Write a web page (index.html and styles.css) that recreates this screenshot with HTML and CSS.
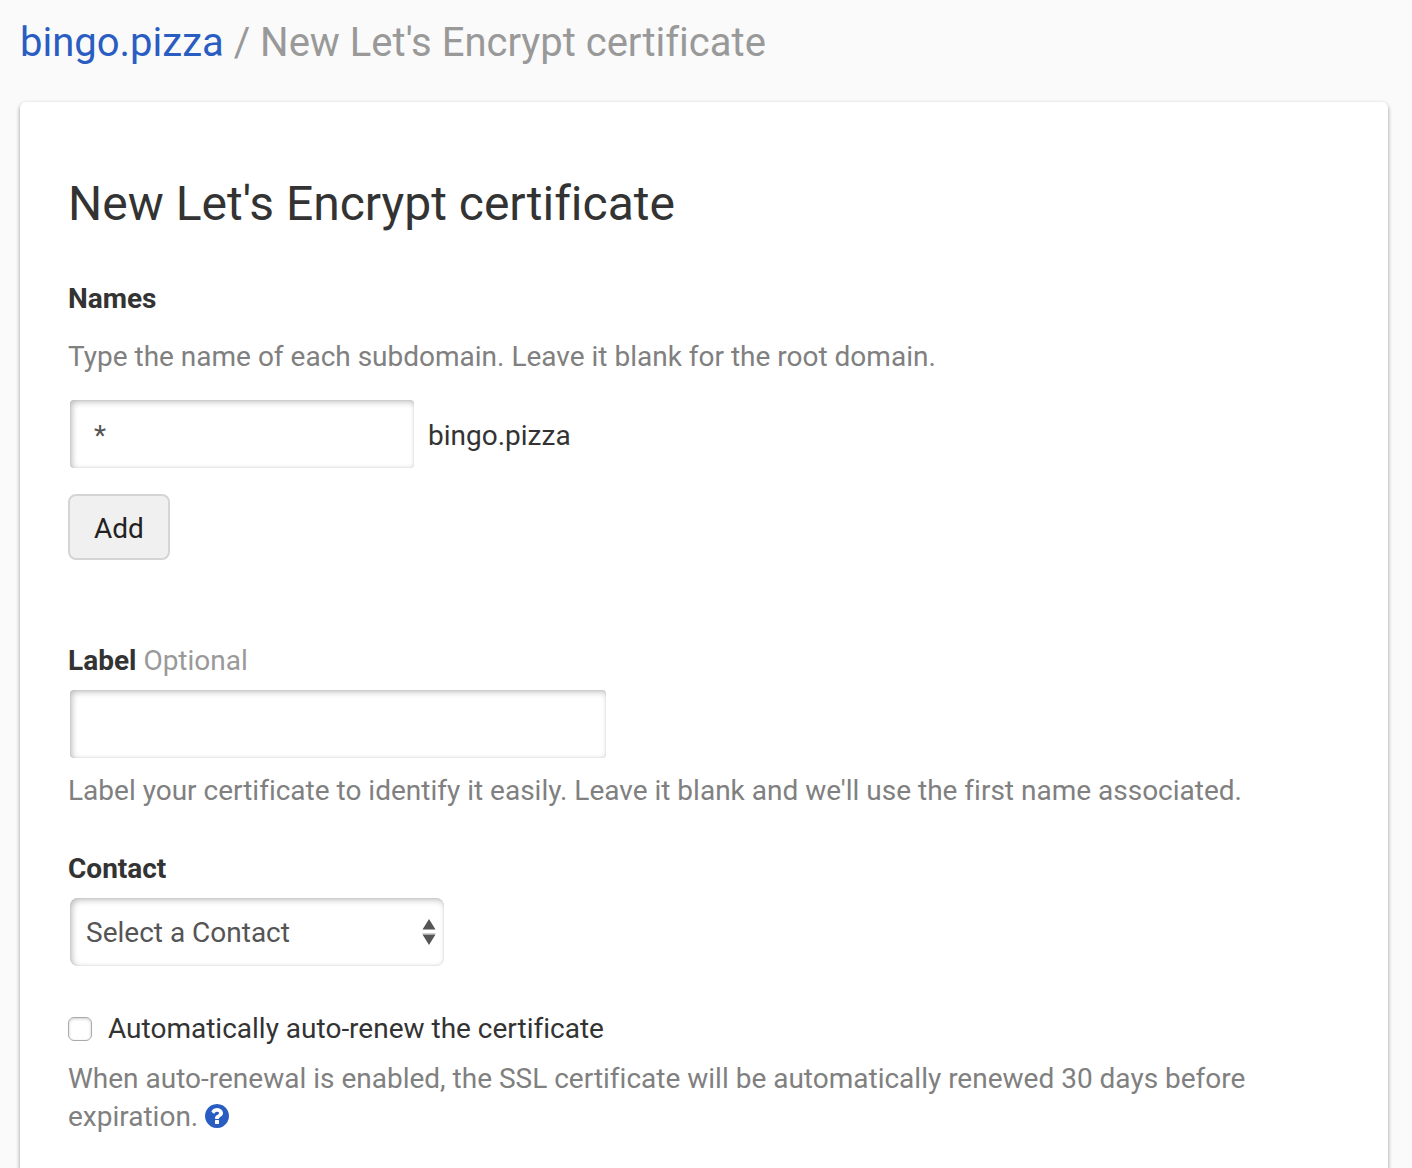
FILE: index.html
```html
<!DOCTYPE html>
<html lang="en">
<head>
<meta charset="utf-8">
<title>New Let's Encrypt certificate</title>
<link rel="stylesheet" href="styles.css">
</head>
<body>
<nav class="breadcrumb"><a href="#">bingo.pizza</a> <span>/</span> <span>New Let's Encrypt certificate</span></nav>
<main class="card">
  <h1>New Let's Encrypt certificate</h1>
  <form>
    <section class="names">
      <label class="title" for="name">Names</label>
      <p class="hint">Type the name of each subdomain. Leave it blank for the root domain.</p>
      <div class="name-row">
        <input class="field" id="name" type="text" value="*">
        <span class="suffix">bingo.pizza</span>
      </div>
      <button class="add" type="button">Add</button>
    </section>
    <section class="group">
      <label class="title" for="label">Label <span class="optional">Optional</span></label>
      <input class="field wide" id="label" type="text">
      <p class="hint">Label your certificate to identify it easily. Leave it blank and we'll use the first name associated.</p>
    </section>
    <section class="group">
      <label class="title" for="contact">Contact</label>
      <div class="select-wrap">
        <select class="field" id="contact"><option>Select a Contact</option></select>
        <svg class="arrows" viewBox="0 0 14 26" aria-hidden="true"><path d="M7 0l6.500 10.500H.5zM7 26l6.500-10.500H.5z"/><path class="rule" d="M.5 14h13v1H.5z"/></svg>
      </div>
    </section>
    <section class="group">
      <div class="check"><input type="checkbox" id="renew"><label for="renew">Automatically auto-renew the certificate</label></div>
      <p class="hint">When auto-renewal is enabled, the SSL certificate will be automatically renewed 30 days before expiration. <a class="help" href="#" aria-label="Help"><svg viewBox="0 0 1536 1536" aria-hidden="true"><path d="M896 1248v-192q0-14-9-23t-23-9H672q-14 0-23 9t-9 23v192q0 14 9 23t23 9h192q14 0 23-9t9-23zm256-672q0-88-55.500-163T958 297t-170-41q-243 0-371 213-15 24 8 42l132 100q7 6 19 6 16 0 25-12 53-68 86-92 34-24 86-24 48 0 85.500 26t37.500 59q0 38-20 61t-68 45q-63 28-115.500 86.500T640 892v36q0 14 9 23t23 9h192q14 0 23-9t9-23q0-19 21.500-49.500T972 829q32-18 49-28.500t46-35 44.500-48 28-60.500 12.500-81zm384 192q0 209-103 385.500T1153.500 1433 768 1536t-385.500-103T103 1153.500 0 768t103-385.500T382.500 103 768 0t385.500 103T1433 382.500 1536 768z"/></svg></a></p>
    </section>
  </form>
</main>
</body>
</html>
```

FILE: styles.css
```css
* { box-sizing: border-box; }
body {
  margin: 0;
  padding: 16px 24px 0 20px;
  background: #fafafa;
  color: #333;
  font: 28px/38px Roboto, sans-serif;
  font-variant-ligatures: none;
}
a { color: #2a5dc2; text-decoration: none; }
.breadcrumb {
  margin-bottom: 32px;
  color: #999;
  font-size: 40px;
  line-height: 54px;
}
.card {
  min-height: calc(100vh - 102px);
  padding: 68px 48px 34px;
  border-radius: 6px;
  background: #fff;
  box-shadow: 0 2px 4px rgba(0, 0, 0, .4);
}
h1 { margin: 0 0 42px; font-size: 48px; font-weight: 400; line-height: 68px; }
.title { display: block; font-weight: 700; }
.optional { color: #999; font-weight: 400; }
.hint { margin: 0; color: #808080; }
.names { margin-bottom: 82px; }
.names .hint { margin: 20px 0 24px; }
.name-row { display: flex; align-items: center; gap: 14px; margin: 0 0 26px 2px; }
.suffix { padding-top: 4px; }
.field {
  display: block;
  width: 344px;
  height: 68px;
  padding: 2px 24px 0;
  border: 0;
  border-radius: 4px;
  background: #fff;
  box-shadow: inset 2px 2px 6px rgba(0, 0, 0, .26), inset 0 0 2px rgba(0, 0, 0, .12);
  color: #555;
  font: inherit;
}
.add {
  display: block;
  height: 66px;
  padding: 4px 24px 0;
  border: 2px solid #d5d5d5;
  border-radius: 8px;
  background: #f0f0f0;
  color: #222;
  font: inherit;
}
.group { margin-bottom: 40px; }
.wide { width: 536px; margin: 10px 0 14px 2px; }
.select-wrap { position: relative; width: 374px; margin: 10px 0 0 2px; }
select.field { width: 100%; padding: 2px 16px 0; border-radius: 8px; appearance: none; }
.arrows { position: absolute; top: 21px; right: 8px; width: 14px; height: 26px; fill: #555; pointer-events: none; }
.rule { fill: #ccc; }
.check { display: flex; align-items: center; gap: 16px; margin: 44px 0 12px; }
.check input {
  width: 24px;
  height: 24px;
  margin: 0;
  border: 1px solid #aaa;
  border-radius: 6px;
  background: #fff;
  box-shadow: inset 0 1px 3px rgba(0, 0, 0, .2);
  appearance: none;
}
.help svg { width: 24px; height: 24px; vertical-align: -2px; fill: currentColor; }
```
